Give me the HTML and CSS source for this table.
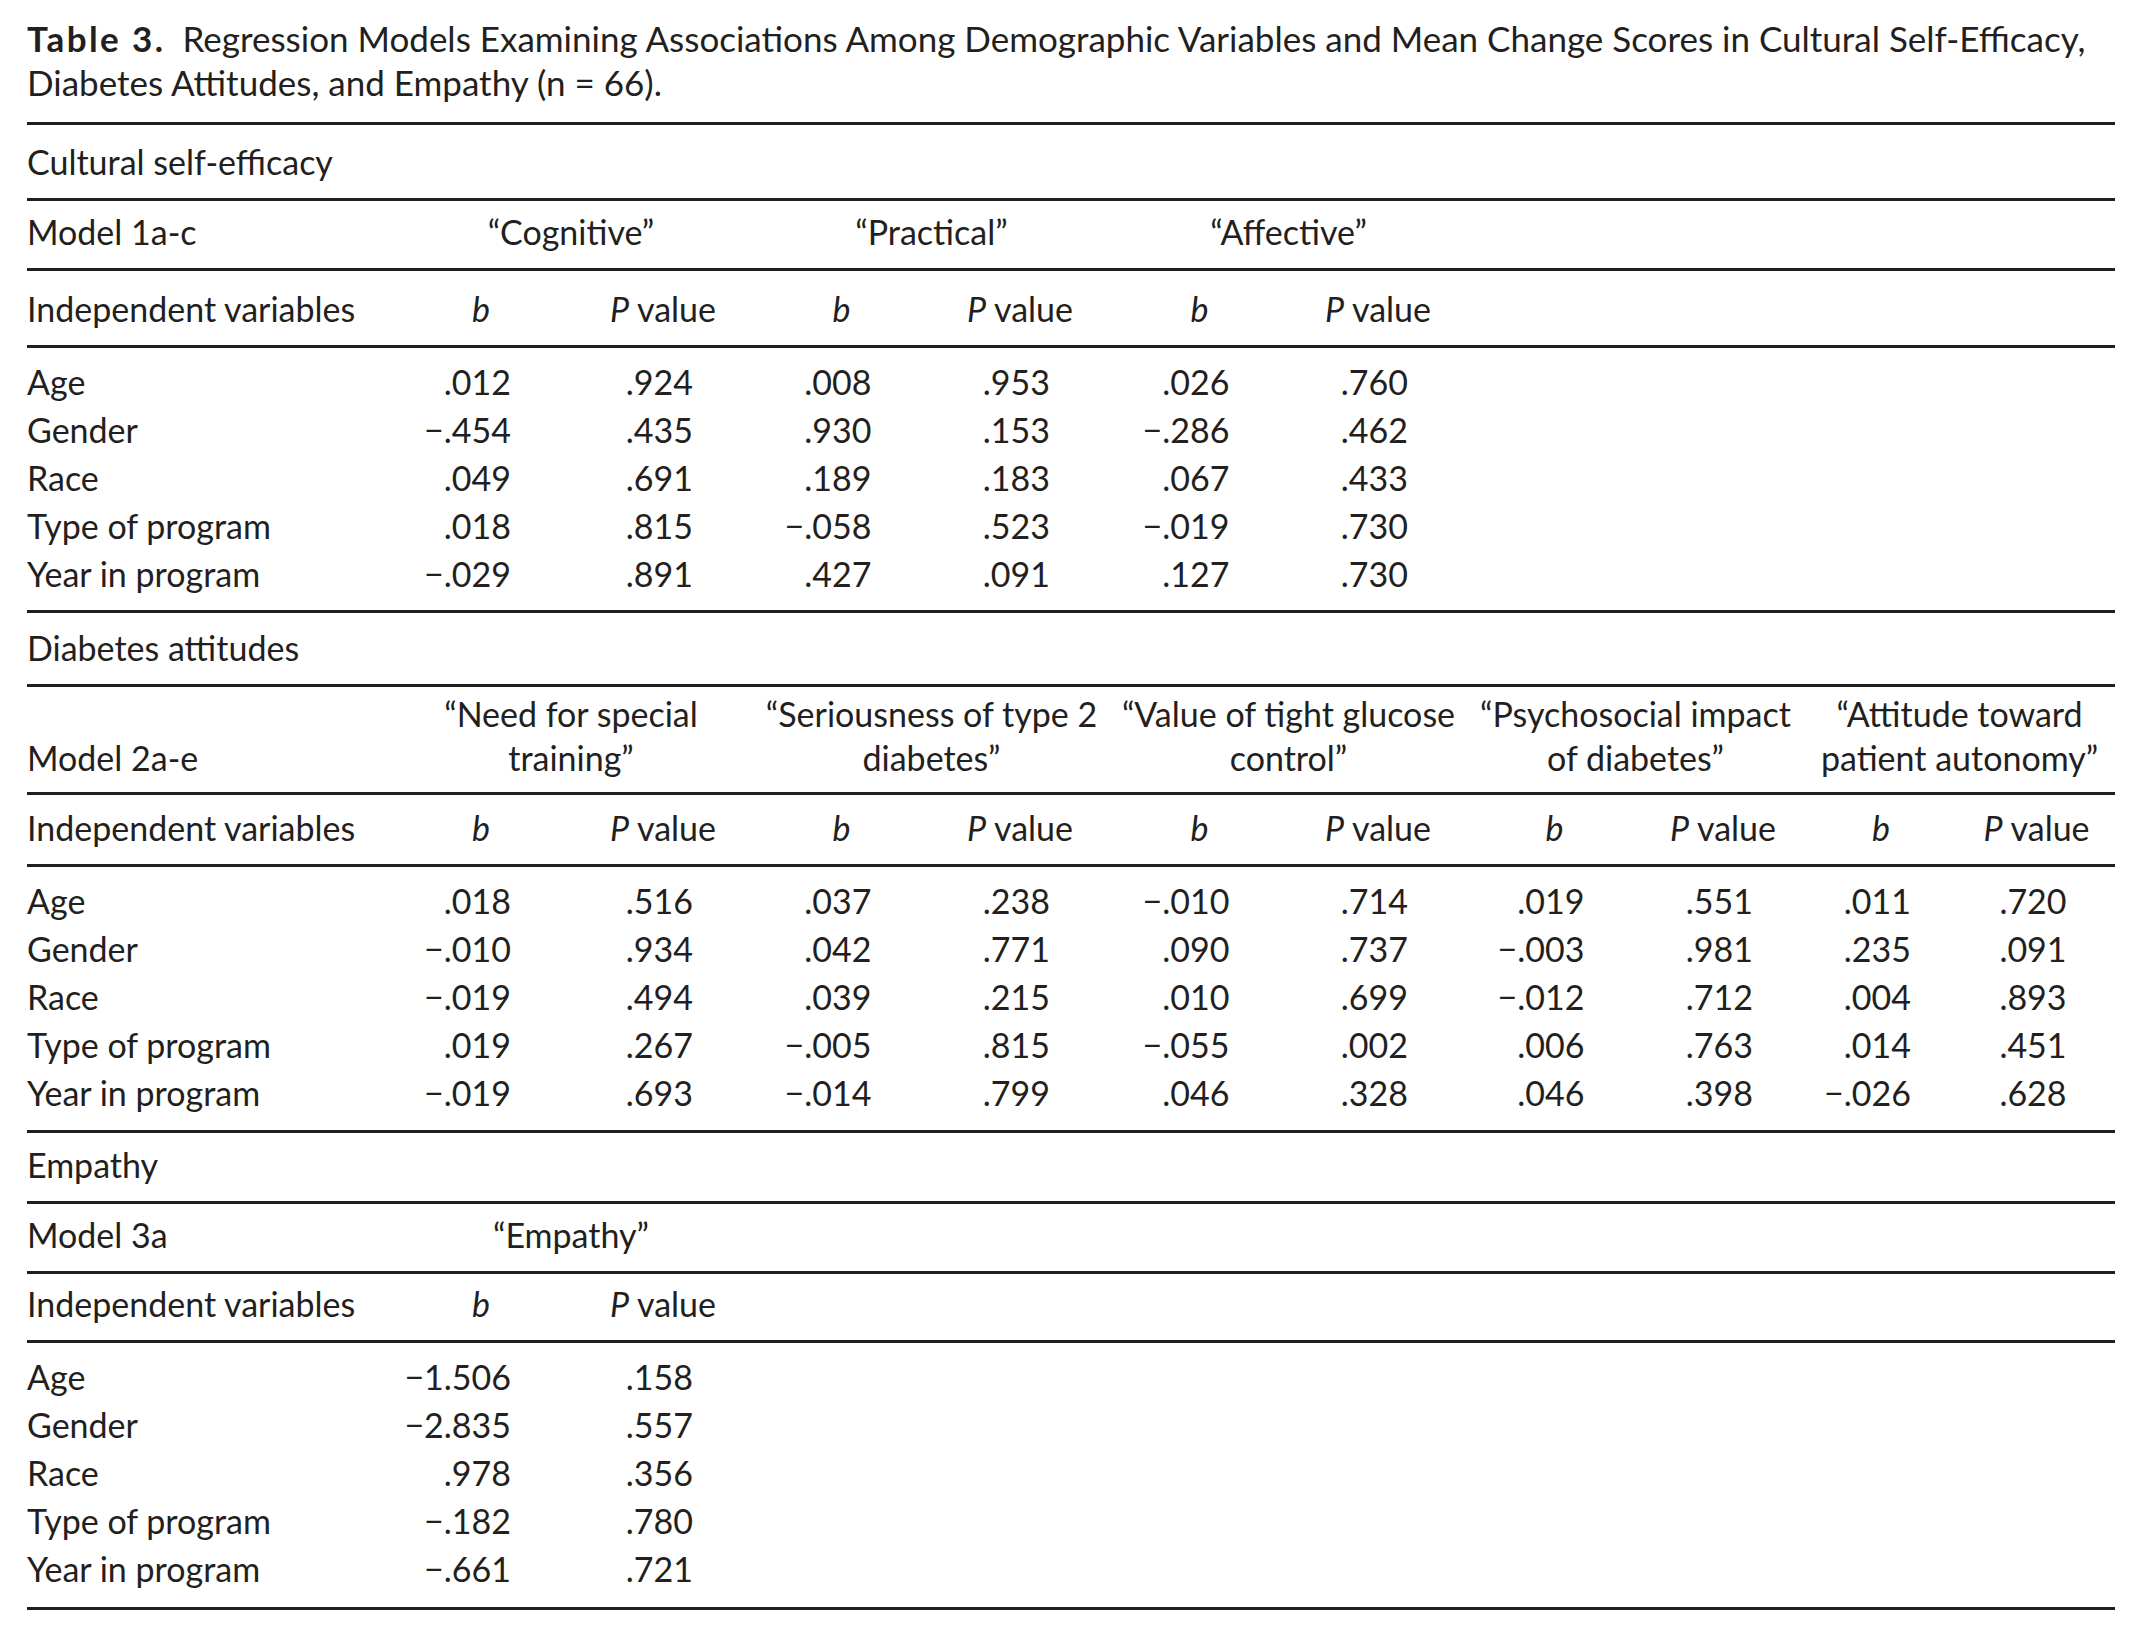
FILE: index.html
```html
<!DOCTYPE html>
<html lang="en">
<head>
<meta charset="utf-8">
<title>Table 3</title>
<link rel="stylesheet" href="styles.css">
</head>
<body>
<div class="page">
  <p class="title"><span class="tnum">Table 3.</span>Regression Models Examining Associations Among Demographic Variables and Mean Change Scores in Cultural Self-Efficacy,<br>Diabetes Attitudes, and Empathy (n = 66).</p>
  <table class="reg">
    <colgroup>
      <col class="w-lab"><col class="w-b1"><col class="w-p1"><col class="w-b2"><col class="w-p2"><col class="w-b3"><col class="w-p3"><col class="w-b4"><col class="w-p4"><col class="w-b5"><col class="w-p5">
    </colgroup>
    <tbody>
      <tr class="section h76"><td colspan="11">Cultural self-efficacy</td></tr>
      <tr class="head h70"><td>Model 1a-c</td><td colspan="2" class="c">“Cognitive”</td><td colspan="2" class="c">“Practical”</td><td colspan="2" class="c">“Affective”</td><td colspan="4"></td></tr>
      <tr class="head h77"><td>Independent variables</td><td class="c"><i>b</i></td><td class="c"><i>P</i> value</td><td class="c"><i>b</i></td><td class="c"><i>P</i> value</td><td class="c"><i>b</i></td><td class="c"><i>P</i> value</td><td colspan="4"></td></tr>
      <tr class="data first"><td>Age</td><td class="c"><span class="num">.012</span></td><td class="c"><span class="num">.924</span></td><td class="c"><span class="num">.008</span></td><td class="c"><span class="num">.953</span></td><td class="c"><span class="num">.026</span></td><td class="c"><span class="num">.760</span></td><td colspan="4"></td></tr>
      <tr class="data"><td>Gender</td><td class="c"><span class="num">−.454</span></td><td class="c"><span class="num">.435</span></td><td class="c"><span class="num">.930</span></td><td class="c"><span class="num">.153</span></td><td class="c"><span class="num">−.286</span></td><td class="c"><span class="num">.462</span></td><td colspan="4"></td></tr>
      <tr class="data"><td>Race</td><td class="c"><span class="num">.049</span></td><td class="c"><span class="num">.691</span></td><td class="c"><span class="num">.189</span></td><td class="c"><span class="num">.183</span></td><td class="c"><span class="num">.067</span></td><td class="c"><span class="num">.433</span></td><td colspan="4"></td></tr>
      <tr class="data"><td>Type of program</td><td class="c"><span class="num">.018</span></td><td class="c"><span class="num">.815</span></td><td class="c"><span class="num">−.058</span></td><td class="c"><span class="num">.523</span></td><td class="c"><span class="num">−.019</span></td><td class="c"><span class="num">.730</span></td><td colspan="4"></td></tr>
      <tr class="data last b12"><td>Year in program</td><td class="c"><span class="num">−.029</span></td><td class="c"><span class="num">.891</span></td><td class="c"><span class="num">.427</span></td><td class="c"><span class="num">.091</span></td><td class="c"><span class="num">.127</span></td><td class="c"><span class="num">.730</span></td><td colspan="4"></td></tr>

      <tr class="section h74"><td colspan="11">Diabetes attitudes</td></tr>
      <tr class="head tall"><td>Model 2a-e</td><td colspan="2" class="c">“Need for special<br>training”</td><td colspan="2" class="c">“Seriousness of type 2<br>diabetes”</td><td colspan="2" class="c">“Value of tight glucose<br>control”</td><td colspan="2" class="c">“Psychosocial impact<br>of diabetes”</td><td colspan="2" class="c">“Attitude toward<br>patient autonomy”</td></tr>
      <tr class="head h72"><td>Independent variables</td><td class="c"><i>b</i></td><td class="c"><i>P</i> value</td><td class="c"><i>b</i></td><td class="c"><i>P</i> value</td><td class="c"><i>b</i></td><td class="c"><i>P</i> value</td><td class="c"><i>b</i></td><td class="c"><i>P</i> value</td><td class="c"><i>b</i></td><td class="c"><i>P</i> value</td></tr>
      <tr class="data first"><td>Age</td><td class="c"><span class="num">.018</span></td><td class="c"><span class="num">.516</span></td><td class="c"><span class="num">.037</span></td><td class="c"><span class="num">.238</span></td><td class="c"><span class="num">−.010</span></td><td class="c"><span class="num">.714</span></td><td class="c"><span class="num">.019</span></td><td class="c"><span class="num">.551</span></td><td class="c"><span class="num">.011</span></td><td class="c"><span class="num">.720</span></td></tr>
      <tr class="data"><td>Gender</td><td class="c"><span class="num">−.010</span></td><td class="c"><span class="num">.934</span></td><td class="c"><span class="num">.042</span></td><td class="c"><span class="num">.771</span></td><td class="c"><span class="num">.090</span></td><td class="c"><span class="num">.737</span></td><td class="c"><span class="num">−.003</span></td><td class="c"><span class="num">.981</span></td><td class="c"><span class="num">.235</span></td><td class="c"><span class="num">.091</span></td></tr>
      <tr class="data"><td>Race</td><td class="c"><span class="num">−.019</span></td><td class="c"><span class="num">.494</span></td><td class="c"><span class="num">.039</span></td><td class="c"><span class="num">.215</span></td><td class="c"><span class="num">.010</span></td><td class="c"><span class="num">.699</span></td><td class="c"><span class="num">−.012</span></td><td class="c"><span class="num">.712</span></td><td class="c"><span class="num">.004</span></td><td class="c"><span class="num">.893</span></td></tr>
      <tr class="data"><td>Type of program</td><td class="c"><span class="num">.019</span></td><td class="c"><span class="num">.267</span></td><td class="c"><span class="num">−.005</span></td><td class="c"><span class="num">.815</span></td><td class="c"><span class="num">−.055</span></td><td class="c"><span class="num">.002</span></td><td class="c"><span class="num">.006</span></td><td class="c"><span class="num">.763</span></td><td class="c"><span class="num">.014</span></td><td class="c"><span class="num">.451</span></td></tr>
      <tr class="data last b13"><td>Year in program</td><td class="c"><span class="num">−.019</span></td><td class="c"><span class="num">.693</span></td><td class="c"><span class="num">−.014</span></td><td class="c"><span class="num">.799</span></td><td class="c"><span class="num">.046</span></td><td class="c"><span class="num">.328</span></td><td class="c"><span class="num">.046</span></td><td class="c"><span class="num">.398</span></td><td class="c"><span class="num">−.026</span></td><td class="c"><span class="num">.628</span></td></tr>

      <tr class="section h71"><td colspan="11">Empathy</td></tr>
      <tr class="head h70"><td>Model 3a</td><td colspan="2" class="c">“Empathy”</td><td colspan="8"></td></tr>
      <tr class="head h69"><td>Independent variables</td><td class="c"><i>b</i></td><td class="c"><i>P</i> value</td><td colspan="8"></td></tr>
      <tr class="data first"><td>Age</td><td class="c"><span class="num">−1.506</span></td><td class="c"><span class="num">.158</span></td><td colspan="8"></td></tr>
      <tr class="data"><td>Gender</td><td class="c"><span class="num">−2.835</span></td><td class="c"><span class="num">.557</span></td><td colspan="8"></td></tr>
      <tr class="data"><td>Race</td><td class="c"><span class="num">.978</span></td><td class="c"><span class="num">.356</span></td><td colspan="8"></td></tr>
      <tr class="data"><td>Type of program</td><td class="c"><span class="num">−.182</span></td><td class="c"><span class="num">.780</span></td><td colspan="8"></td></tr>
      <tr class="data last b14 end"><td>Year in program</td><td class="c"><span class="num">−.661</span></td><td class="c"><span class="num">.721</span></td><td colspan="8"></td></tr>
    </tbody>
  </table>
</div>
</body>
</html>
```

FILE: styles.css
```css
html, body {
  margin: 0;
  padding: 0;
  background: #ffffff;
}

body {
  font-family: "Lato", "Liberation Sans", sans-serif;
  font-size: 34px;
  color: #231f20;
}

.page {
  padding: 17px 0 0 27px;
  width: 2088px;
}

.title {
  margin: 0 0 18px 0;
  font-size: 35px;
  line-height: 43.5px;
  white-space: nowrap;
}

.tnum {
  font-weight: 700;
  letter-spacing: 2.4px;
  margin-right: 17px;
}

.reg {
  border-collapse: separate;
  border-spacing: 0;
  table-layout: fixed;
  width: 2088px;
}

.w-lab { width: 362px; }
.w-b1 { width: 184px; }
.w-p1 { width: 180px; }
.w-b2 { width: 177px; }
.w-p2 { width: 180px; }
.w-b3 { width: 179px; }
.w-p3 { width: 178px; }
.w-b4 { width: 175px; }
.w-p4 { width: 162px; }
.w-b5 { width: 154px; }
.w-p5 { width: 157px; }

.reg td {
  padding: 0;
  vertical-align: bottom;
  white-space: nowrap;
  text-align: left;
}

.reg td.c {
  text-align: center;
}

/* header-type rows: text anchored to the rule below */
.section td,
.head td {
  border-top: 3px solid #1f1f1f;
  padding-top: 12px;
  padding-bottom: 14px;
  line-height: 44px;
}

/* row heights (rule to rule) */
.h69 td { padding-top: 8px; }
.h70 td { padding-top: 9px; }
.h71 td { padding-top: 10px; }
.h72 td { padding-top: 11px; }
.h74 td { padding-top: 13px; }
.h76 td { padding-top: 15px; }
.h77 td { padding-top: 16px; }

.head.tall td {
  padding-top: 5px;
  padding-bottom: 12px;
  line-height: 44px;
}

.data td {
  line-height: 48px;
}

.data.first td {
  border-top: 3px solid #1f1f1f;
  padding-top: 10px;
}

.data.last td {
  padding-bottom: 13px;
}

.data.last.b12 td { padding-bottom: 12px; }
.data.last.b13 td { padding-bottom: 13px; }
.data.last.b14 td { padding-bottom: 14px; }

.data.end td {
  border-bottom: 3px solid #1f1f1f;
}

.num {
  display: inline-flex;
  justify-content: flex-end;
  width: 60px;
}

i {
  font-style: italic;
}
```
